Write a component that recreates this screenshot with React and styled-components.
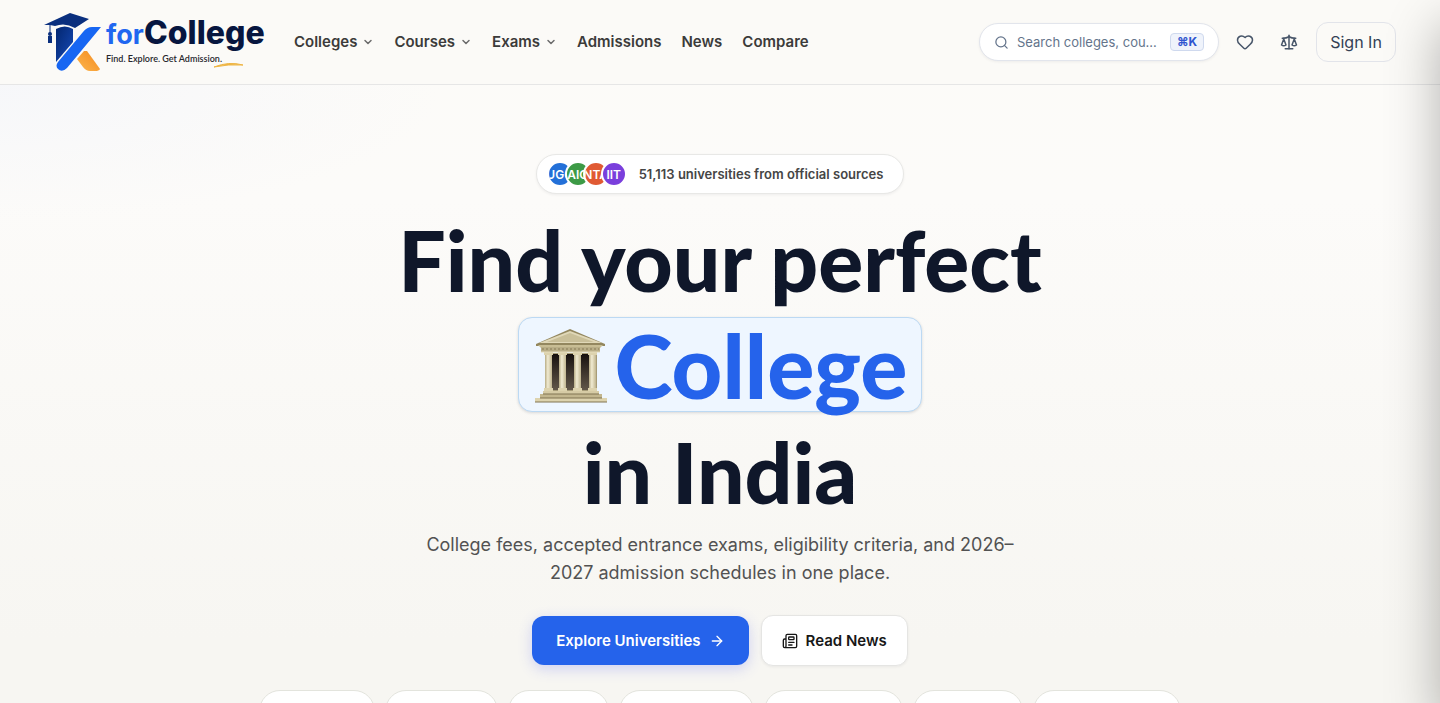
import React from "react";
import styled, { createGlobalStyle, css } from "styled-components";
import { ChevronDown, Search, Heart, Scale, ArrowRight, Newspaper } from "lucide-react";

const bodyFont = `"Inter", "Liberation Sans", sans-serif`;
const displayFont = `"Lato", "Inter", sans-serif`;

const GlobalStyle = createGlobalStyle`
  *, *::before, *::after { box-sizing: border-box; }
  html { background: #fbfaf8; }
  body {
    margin: 0;
    font-family: ${bodyFont};
    color: #3a3a3a;
    -webkit-font-smoothing: antialiased;
    overflow-x: hidden;
  }
  a { color: inherit; text-decoration: none; }
  button, input { font: inherit; }
`;

const Page = styled.div`
  min-height: 100vh;
  overflow: hidden;
  background:
    radial-gradient(ellipse 440px 130px at 0 90px, rgba(246, 247, 250, 0.9), transparent),
    linear-gradient(#fcfbf8, #fcfbf9 200px, #f7f6f2 640px);
`;

const Header = styled.header`
  display: flex;
  align-items: center;
  height: 85px;
  padding: 0 44px;
  background: #fbfaf7;
  border-bottom: 1px solid #e6e6e6;
`;

const LogoLink = styled.a`
  display: flex;
  width: 222px;
  height: 60px;
  svg { display: block; }
`;

const Nav = styled.nav`
  display: flex;
  align-items: center;
  gap: 20px;
  margin-left: 28px;
  flex: 1;
`;

const NavLink = styled.a`
  display: flex;
  align-items: center;
  gap: 5px;
  font-size: 15px;
  line-height: 20px;
  font-weight: 600;
  color: #3b3b3a;
  white-space: nowrap;
  svg { color: #6b6b6b; }
`;

const Actions = styled.div`
  display: flex;
  align-items: center;
`;

const SearchBox = styled.label`
  display: flex;
  align-items: center;
  gap: 8px;
  width: 240px;
  height: 38px;
  padding: 0 14px;
  margin-right: 4px;
  border: 1px solid #e2e5ec;
  border-radius: 19px;
  background: #fff;
  box-shadow: 0 1px 3px rgba(15, 23, 42, 0.06);
  color: #64748b;
`;

const SearchInput = styled.input`
  flex: 1;
  min-width: 0;
  border: 0;
  padding: 0;
  outline: 0;
  background: transparent;
  font-size: 13px;
  text-overflow: ellipsis;
  &::placeholder { color: #64748b; opacity: 1; }
`;

const Shortcut = styled.kbd`
  width: 34px;
  height: 18px;
  border: 1px solid #cfd9ee;
  border-radius: 4px;
  background: #eff3fb;
  color: #2f55cf;
  font: 700 12px/16px ${bodyFont};
  text-align: center;
`;

const IconButton = styled.button`
  display: grid;
  place-items: center;
  width: 44px;
  height: 40px;
  padding: 0;
  border: 0;
  background: transparent;
  color: #475569;
`;

const SignIn = styled.button`
  width: 80px;
  height: 40px;
  margin-left: 5px;
  padding: 0;
  border: 1px solid #e2e4ea;
  border-radius: 12px;
  background: transparent;
  color: #334155;
  font-size: 16px;
`;

const Hero = styled.main`
  display: flex;
  flex-direction: column;
  align-items: center;
  padding: 69px 24px 40px;
`;

const SourceBadge = styled.div`
  display: flex;
  align-items: center;
  height: 40px;
  padding: 0 20px 0 10px;
  border: 1px solid #e8e8e6;
  border-radius: 20px;
  background: #fff;
  box-shadow: 0 1px 3px rgba(15, 23, 42, 0.06);
  font-size: 13px;
  font-weight: 600;
  color: #454545;
`;

const Avatars = styled.div`
  display: flex;
  margin-right: 12px;
`;

const Avatar = styled.span`
  display: flex;
  align-items: center;
  justify-content: center;
  width: 26px;
  height: 26px;
  margin-right: -8px;
  border: 2px solid #fff;
  border-radius: 50%;
  overflow: hidden;
  background: ${(p) => p.$color};
  color: #fff;
  font-size: 12px;
  font-weight: 600;
  &:last-child { margin-right: 0; }
`;

const Title = styled.h1`
  display: flex;
  flex-direction: column;
  align-items: center;
  margin: 18px 0 0;
  font-family: ${displayFont};
  font-size: 84px;
  line-height: 96px;
  font-weight: 900;
  color: #0f172a;
  text-align: center;
`;

const Highlight = styled.span`
  display: flex;
  align-items: center;
  justify-content: center;
  gap: 8px;
  height: 95px;
  margin: 9px 0 12px;
  padding: 0 14px 0 16px;
  border: 1px solid #bcd9f3;
  border-radius: 14px;
  background: #eef6ff;
  box-shadow: 0 1px 3px rgba(15, 23, 42, 0.14);
  color: #2563eb;
  font-size: 88px;
`;

const Lead = styled.p`
  max-width: 600px;
  margin: 11px 0 0;
  font-size: 18px;
  line-height: 28px;
  color: #525252;
  text-align: center;
`;

const Buttons = styled.div`
  display: flex;
  align-items: center;
  gap: 12px;
  margin-top: 28px;
`;

const Cta = styled.a`
  display: flex;
  align-items: center;
  gap: 8px;
  border-radius: 12px;
  font-size: 15px;
  font-weight: 600;
  white-space: nowrap;
  ${(p) =>
    p.$primary
      ? css`
          height: 49px;
          padding: 0 24px;
          background: #2563eb;
          color: #fff;
          box-shadow: 0 4px 14px rgba(70, 80, 240, 0.22);
        `
      : css`
          height: 51px;
          padding: 0 20px;
          background: #fff;
          border: 1px solid #e5e5e3;
          color: #171717;
          box-shadow: 0 1px 3px rgba(15, 23, 42, 0.06);
        `}
`;

const Chips = styled.div`
  display: flex;
  justify-content: center;
  gap: 10px;
  margin-top: 24px;
`;

const Chip = styled.span`
  width: ${(p) => p.$width}px;
  height: 42px;
  border: 1px solid #e3e4dd;
  border-radius: 21px;
  background: #fff;
`;

const Drawer = styled.aside`
  position: fixed;
  top: 0;
  bottom: 0;
  left: 100%;
  width: 320px;
  box-shadow: 0 25px 50px rgba(0, 0, 0, 0.3);
  pointer-events: none;
`;

function Logo() {
  return (
    <svg width="222" height="60" viewBox="44 12 222 60" role="img" aria-label="KforCollege">
      <defs>
        <linearGradient id="stem" x1="0" y1="0" x2="1" y2="1">
          <stop offset="0" stopColor="#03266f" />
          <stop offset="1" stopColor="#164bb8" />
        </linearGradient>
        <linearGradient id="leg" x1="1" y1="0" x2="0" y2="1">
          <stop offset="0" stopColor="#f58a1c" />
          <stop offset="1" stopColor="#fbb650" />
        </linearGradient>
      </defs>
      <path d="M56 29Q65 24 73 29V42L56 62Z" fill="url(#stem)" />
      <path d="M44 25 70 13 89 19 75 28Q65 22 55 26L50 25Z" fill="#0a2f7e" />
      <path d="M50 25V34" stroke="#0a2f7e" strokeWidth="1" />
      <circle cx="50" cy="34" r="2" fill="#0a2f7e" />
      <path d="M48 36H52V43H48Z" fill="#0a2f7e" />
      <path d="M77 59 84 51H87L100 69Q99 71 95 71H90Q86 71 83 67Z" fill="url(#leg)" />
      <path d="M101 27H92Q87 27 83 32L58 62Q55 66 58 69 62 73 67 68Z" fill="#1766f2" />
      <text x="106" y="44" fontFamily={bodyFont} fontSize="27" fontWeight="700" fill="#2067f0">for</text>
      <text x="144" y="44" fontFamily={bodyFont} fontSize="32" fontWeight="800" fill="#07163f">College</text>
      <text x="106" y="62" fontFamily="Lato, sans-serif" fontSize="9" fontWeight="600" fill="#26262c">
        Find. Explore. Get Admission.
      </text>
      <path d="M214 67Q229 61 243 65Q228 64 214 67Z" fill="#eeb544" stroke="#eeb544" />
    </svg>
  );
}

function Building() {
  return (
    <svg width="72" height="76" viewBox="0 0 72 76" aria-hidden="true">
      <defs>
        <linearGradient id="col" x1="0" x2="1">
          <stop offset="0" stopColor="#b8ad86" />
          <stop offset="0.4" stopColor="#f1ebd2" />
          <stop offset="1" stopColor="#c0b58f" />
        </linearGradient>
        <linearGradient id="gap" x1="0" y1="0" x2="0" y2="1">
          <stop offset="0" stopColor="#17110f" />
          <stop offset="1" stopColor="#625749" />
        </linearGradient>
      </defs>
      <path d="M10 26H62V64H10Z" fill="#a79c78" />
      {[16, 31, 46].map((x) => (
        <rect key={x} x={x} y="27" width="9" height="36" fill="url(#gap)" />
      ))}
      {[10, 24, 39, 54].map((x) => (
        <g key={x}>
          <rect x={x} y="27" width="7" height="37" fill="url(#col)" />
          <rect x={x - 1} y="25" width="9" height="3" fill="#ddd3ae" />
          <rect x={x - 1} y="61" width="9" height="3" fill="#ddd3ae" />
        </g>
      ))}
      <path d="M1 17 35 2 70 17V19H1Z" fill="#93875f" />
      <path d="M4 16 35 4 67 16Z" fill="#e0d8b8" />
      <path d="M12 15 35 6 59 15Z" fill="#c9bf99" />
      <path d="M3 18H68L65 21H6Z" fill="#c8bd94" />
      <path d="M6 20H65V25H6Z" fill="#b9ae87" />
      <path d="M7 22H64" stroke="#877b56" strokeDasharray="2 2" />
      <path d="M6 25H65" stroke="#e6ddbb" />
      <path d="M8 64H64V67H8Z" fill="#d6cba5" />
      <path d="M5 67H67V71H5Z" fill="#c2b68e" />
      <path d="M0 71H72V75H0Z" fill="#ddd3ae" />
      <path d="M8 67H64M5 71H67M0 75H72" stroke="#817553" />
    </svg>
  );
}

const navItems = [
  ["Colleges", true], ["Courses", true], ["Exams", true],
  ["Admissions", false], ["News", false], ["Compare", false],
];
const bodies = [["UGC", "#2370d8"], ["AIC", "#3d9a46"], ["NTA", "#e05a33"], ["IIT", "#7a3fdc"]];
const chipWidths = [116, 113, 101, 135, 139, 110, 148];

export default function App() {
  return (
    <>
      <GlobalStyle />
      <Page>
        <Header>
          <LogoLink href="#home"><Logo /></LogoLink>
          <Nav aria-label="Main">
            {navItems.map(([label, menu]) => (
              <NavLink key={label} href={`#${label.toLowerCase()}`}>
                {label}
                {menu && <ChevronDown size={12} strokeWidth={3} />}
              </NavLink>
            ))}
          </Nav>
          <Actions>
            <SearchBox>
              <Search size={15} />
              <SearchInput aria-label="Search" placeholder="Search colleges, cou..." />
              <Shortcut>⌘K</Shortcut>
            </SearchBox>
            <IconButton aria-label="Saved"><Heart size={18} /></IconButton>
            <IconButton aria-label="Compare colleges"><Scale size={18} /></IconButton>
            <SignIn>Sign In</SignIn>
          </Actions>
        </Header>
        <Hero>
          <SourceBadge>
            <Avatars>
              {bodies.map(([name, color]) => <Avatar key={name} $color={color}>{name}</Avatar>)}
            </Avatars>
            51,113 universities from official sources
          </SourceBadge>
          <Title>
            <span>Find your perfect</span>
            <Highlight><Building />College</Highlight>
            <span>in India</span>
          </Title>
          <Lead>College fees, accepted entrance exams, eligibility criteria, and 2026–2027 admission schedules in one place.</Lead>
          <Buttons>
            <Cta $primary href="#universities">Explore Universities <ArrowRight size={16} /></Cta>
            <Cta href="#news"><Newspaper size={16} />Read News</Cta>
          </Buttons>
          <Chips>
            {chipWidths.map((w) => <Chip key={w} $width={w} />)}
          </Chips>
        </Hero>
        <Drawer aria-hidden="true" />
      </Page>
    </>
  );
}
